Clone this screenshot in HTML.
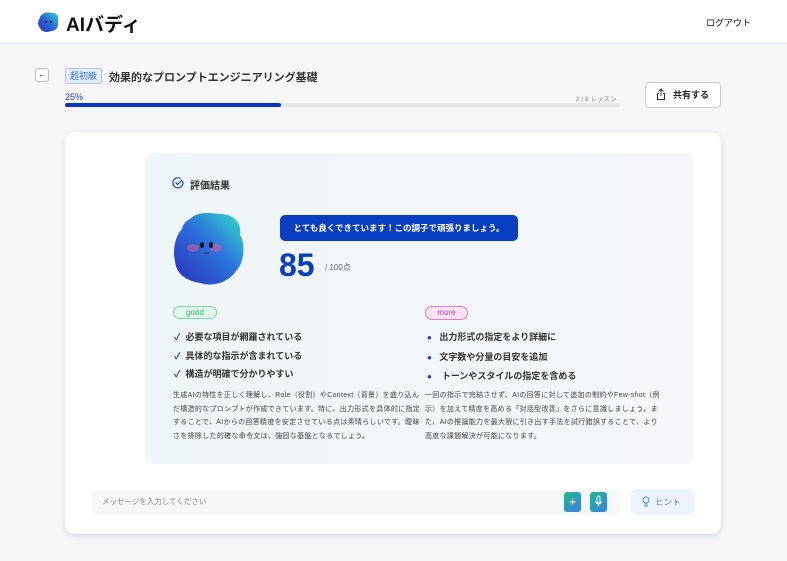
<!DOCTYPE html>
<html><head><meta charset="utf-8"><style>
*{box-sizing:border-box;margin:0;padding:0}
body{width:787px;height:561px;background:#f6f6f8;font-family:"Liberation Sans","Noto Sans CJK JP",sans-serif;position:relative;overflow:hidden;color:#222}
.a{position:absolute}
.hdr{left:0;top:0;width:787px;height:44px;background:#fff;border-bottom:1px solid #e2e6f0}
.card{left:65px;top:132px;width:656px;height:402px;background:#fff;border-radius:10px;box-shadow:0 2px 6px rgba(60,80,160,.18)}
.panel{left:145px;top:153px;width:549px;height:311px;border-radius:8px;background:linear-gradient(90deg,#eff6f7,#f4f6fa)}
.li{font-size:9px;font-weight:bold;color:#333}
.p{font-size:7px;line-height:13.6px;color:#444;letter-spacing:.3px}
</style></head><body>
<div class="a hdr"></div>
<svg class="a" style="left:37px;top:11px" width="23" height="22" viewBox="0 0 23 22"><defs><linearGradient id="g1" x1="1" y1="0" x2="0" y2="1"><stop offset="0" stop-color="#2fd6c0"/><stop offset=".5" stop-color="#2a6ad8"/><stop offset="1" stop-color="#2a2fb0"/></linearGradient></defs><path d="M6 3C9 0 13 2 16 2 21 2 22 7 21 11 22 16 19 20 14 20 10 22 5 21 3 17 0 14 1 9 3 7 3 5 4 4 6 3Z" fill="url(#g1)"/><circle cx="9" cy="11" r="1" fill="#111"/><circle cx="14" cy="11" r="1" fill="#111"/></svg>
<div class="a" style="left:66px;top:10px;font-size:19px;font-weight:bold;color:#111">AIバディ</div>
<div class="a" style="left:706px;top:16px;font-size:9px;color:#111">ログアウト</div>
<div class="a" style="left:35px;top:68px;width:14px;height:14px;border:1px solid #bbb;border-radius:3px;background:#fff;font-size:8px;text-align:center;line-height:12px">←</div>
<div class="a" style="left:65px;top:68px;width:37px;height:16px;border:1px solid #a9c2ee;background:#e4edfb;border-radius:3px;color:#3a6fd8;font-size:9px;text-align:center;line-height:14px">超初級</div>
<div class="a" style="left:109px;top:69px;font-size:11px;font-weight:bold;color:#333">効果的なプロンプトエンジニアリング基礎</div>
<div class="a" style="left:65px;top:92px;font-size:9px;color:#1b3fc0">25%</div>
<div class="a" style="left:576px;top:93px;font-size:6.5px;color:#888">2 / 8 レッスン</div>
<div class="a" style="left:65px;top:103px;width:555px;height:4px;background:#e6e6e8;border-radius:2px"></div>
<div class="a" style="left:65px;top:103px;width:216px;height:4px;background:#0b36c2;border-radius:2px"></div>
<div class="a" style="left:645px;top:82px;width:76px;height:26px;border:1px solid #ccc;border-radius:4px;background:#fff;font-size:9px;font-weight:bold;line-height:24px;padding-left:27px">共有する</div>
<svg class="a" style="left:656px;top:88px" width="10" height="13" viewBox="0 0 10 13"><path d="M5 1V8M2.5 3.5 5 1 7.5 3.5M3 5.5H1.5V11.5H8.5V5.5H7" fill="none" stroke="#333" stroke-width="1"/></svg>
<div class="a card"></div>
<div class="a panel"></div>
<svg class="a" style="left:172px;top:177px" width="12" height="12" viewBox="0 0 12 12"><path d="M10.5 4A5 5 0 1 1 8.5 1.6" fill="none" stroke="#1b3fc0" stroke-width="1.2"/><path d="M3.5 5.5 5.5 7.5 10 3" fill="none" stroke="#1b3fc0" stroke-width="1.2"/></svg>
<div class="a" style="left:190px;top:177px;font-size:10px;font-weight:bold;color:#333">評価結果</div>
<svg class="a" style="left:172px;top:209px" width="76" height="78" viewBox="0 0 76 78"><defs><linearGradient id="g2" x1="1" y1="0" x2="0" y2="1"><stop offset="0" stop-color="#34e0c6"/><stop offset=".45" stop-color="#2b73dc"/><stop offset="1" stop-color="#2a2fb8"/></linearGradient></defs><path d="M18 10C26 2 38 4 48 5 62 5 70 14 68 26 74 36 72 54 64 62 56 74 40 78 28 74 16 72 4 66 3 52 0 40 4 26 10 20 11 15 14 12 18 10Z" fill="url(#g2)"/><ellipse cx="21" cy="39" rx="6" ry="4" fill="#e55a9a" opacity=".5"/><ellipse cx="44" cy="39" rx="6" ry="4" fill="#e55a9a" opacity=".5"/><ellipse cx="30" cy="36" rx="2" ry="3" fill="#111"/><ellipse cx="39" cy="36" rx="2" ry="3" fill="#111"/><path d="M32 44H37" stroke="#223" stroke-width=".8"/></svg>
<div class="a" style="left:280px;top:215px;width:238px;height:26px;background:#0a3ec0;border-radius:5px;color:#fff;font-size:8.5px;font-weight:bold;text-align:center;line-height:26px">とても良くできています！この調子で頑張りましょう。</div>
<div class="a" style="left:279px;top:247px;font-size:32px;font-weight:bold;color:#0a3ec0">85</div>
<div class="a" style="left:325px;top:262px;font-size:8px;color:#666">/ 100点</div>
<div class="a" style="left:173px;top:306px;width:44px;height:13px;border:1px solid #7dd9a6;background:#e0f7ea;border-radius:7px;color:#2eb56b;font-size:8px;text-align:center;line-height:11px">good</div>
<div class="a" style="left:425px;top:306px;width:43px;height:14px;border:1px solid #f07ac0;background:#fde6f2;border-radius:7px;color:#e03aa0;font-size:8px;text-align:center;line-height:12px">more</div>
<div class="a li" style="left:174px;top:328px;line-height:18.5px"><span style="color:#1b3fc0">✓</span>&nbsp; 必要な項目が網羅されている<br><span style="color:#1b3fc0">✓</span>&nbsp; 具体的な指示が含まれている<br><span style="color:#1b3fc0">✓</span>&nbsp; 構造が明確で分かりやすい</div>
<div class="a li" style="left:427px;top:328px;line-height:18.5px"><span style="color:#1b3fc0;font-size:8px">●</span>&nbsp;&nbsp; 出力形式の指定をより詳細に<br><span style="color:#1b3fc0;font-size:8px">●</span>&nbsp;&nbsp; 文字数や分量の目安を追加<br><span style="color:#1b3fc0;font-size:8px">●</span>&nbsp;&nbsp;&nbsp; トーンやスタイルの指定を含める</div>
<div class="a p" style="left:173px;top:389px;width:248px">生成AIの特性を正しく理解し、Role（役割）やContext（背景）を盛り込んだ構造的なプロンプトが作成できています。特に、出力形式を具体的に指定することで、AIからの回答精度を安定させている点は素晴らしいです。曖昧さを排除した的確な命令文は、強固な基盤となるでしょう。</div>
<div class="a p" style="left:425px;top:389px;width:240px">一回の指示で完結させず、AIの回答に対して追加の制約やFew-shot（例示）を加えて精度を高める「対話型改善」をさらに意識しましょう。また、AIの推論能力を最大限に引き出す手法を試行錯誤することで、より高度な課題解決が可能になります。</div>
<div class="a" style="left:92px;top:489px;width:528px;height:26px;background:#f7f7f8;border-radius:5px;font-size:7.5px;color:#888;line-height:26px;padding-left:10px">メッセージを入力してください</div>
<div class="a" style="left:564px;top:492px;width:17px;height:20px;border-radius:3px;background:linear-gradient(135deg,#23b889,#3a80e8);color:#fff;font-size:13px;text-align:center;line-height:19px">+</div>
<div class="a" style="left:590px;top:492px;width:17px;height:20px;border-radius:3px;background:linear-gradient(135deg,#23b889,#3a80e8)"></div>
<svg class="a" style="left:594px;top:495px" width="9" height="14" viewBox="0 0 9 14"><rect x="3" y="1" width="3" height="7" rx="1.5" fill="none" stroke="#fff" stroke-width=".9"/><path d="M1.5 6A3 3 0 0 0 7.5 6M4.5 9V12" fill="none" stroke="#fff" stroke-width=".9"/></svg>
<div class="a" style="left:631px;top:489px;width:63px;height:26px;background:#eef4fe;border-radius:5px;color:#4d86e8;font-size:8.5px;line-height:26px;padding-left:24px">ヒント</div>
<svg class="a" style="left:642px;top:496px" width="8" height="12" viewBox="0 0 8 12"><circle cx="4" cy="4" r="3" fill="none" stroke="#4d86e8" stroke-width=".9"/><path d="M3 7.5V10H5V7.5" fill="none" stroke="#4d86e8" stroke-width=".9"/></svg>
</body></html>
